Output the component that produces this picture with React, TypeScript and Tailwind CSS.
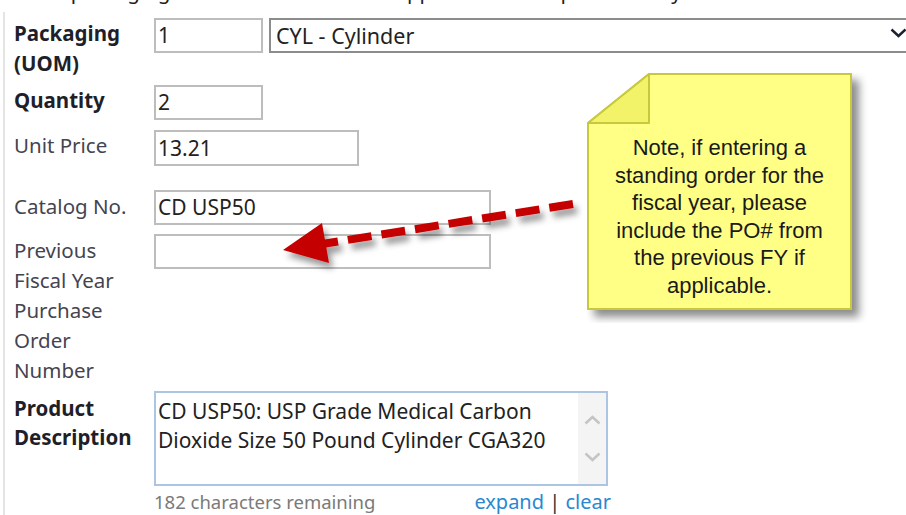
import React from 'react';

const labelBold = 'font-bold text-[#1f1f2a]';
const labelPlain = 'text-[#444450]';

function TextBox({ value, width }: { value?: string; width: string }) {
  return (
    <div
      className={`${width} h-[35px] border-2 border-[#bdbdbd] bg-white px-[2px] text-[21px] leading-[31px] text-[#222]`}
    >
      {value}
    </div>
  );
}

function Chevron({ up, className }: { up?: boolean; className?: string }) {
  return (
    <svg width="17" height="10" viewBox="0 0 17 10" className={className}>
      <polyline
        points={up ? '1.5,8.5 8.5,2 15.5,8.5' : '1.5,1.5 8.5,8 15.5,1.5'}
        fill="none"
        stroke="currentColor"
        strokeWidth="2.4"
      />
    </svg>
  );
}

export default function App() {
  return (
    <div className="relative h-[515px] w-[906px] overflow-hidden bg-white font-['Noto_Sans','Open_Sans',sans-serif] text-[20.5px]">
      {/* tail of the line above the form */}
      <div className="h-[6px] overflow-hidden">
        <p className="mt-[-24px] pl-[14px] leading-[30px] text-[#222] whitespace-nowrap">
          Enter packaging units as shown in the supplier&nbsp;&nbsp;&nbsp;&nbsp;&nbsp;&nbsp;&nbsp;&nbsp;&nbsp;&nbsp;&nbsp;&nbsp;&nbsp;&nbsp;&nbsp;&nbsp;&nbsp;quote exactly.
        </p>
      </div>

      <div className="ml-[3px] mt-[6px] flex flex-col border-l-2 border-[#e4e4e4] pl-[9px] pt-[6px] pb-[40px]">
        {/* Packaging */}
        <div className="flex">
          <div className={`w-[140px] shrink-0 leading-[30px] ${labelBold}`}>
            Packaging
            <br />
            (UOM)
          </div>
          <div className="flex">
            <TextBox value="1" width="w-[109px]" />
            <div className="ml-[6px] flex h-[35px] w-[650px] items-center justify-between border-2 border-[#8c8c8c] pl-[5px] pr-[10px] text-[21.5px] text-[#222]">
              <span className="leading-[31px]">CYL - Cylinder</span>
              <Chevron className="mb-[6px] text-[#1c2230]" />
            </div>
          </div>
        </div>

        {/* Quantity */}
        <div className="mt-[7px] flex">
          <div className={`w-[140px] shrink-0 leading-[30px] ${labelBold}`}>Quantity</div>
          <TextBox value="2" width="w-[109px]" />
        </div>

        {/* Unit Price */}
        <div className="mt-[10px] flex">
          <div className={`w-[140px] shrink-0 leading-[30px] ${labelPlain}`}>Unit Price</div>
          <div className="h-[36px] w-[205px] border-2 border-[#bdbdbd] px-[2px] text-[21px] leading-[32px] text-[#222]">
            13.21
          </div>
        </div>

        {/* Catalog No. */}
        <div className="mt-[24px] flex">
          <div className={`w-[140px] shrink-0 pt-[1px] leading-[30px] ${labelPlain}`}>Catalog No.</div>
          <TextBox value="CD USP50" width="w-[337px]" />
        </div>

        {/* Previous FY PO */}
        <div className="mt-[9px] flex">
          <div className={`w-[140px] shrink-0 pt-[1px] leading-[30px] ${labelPlain}`}>
            Previous
            <br />
            Fiscal Year
            <br />
            Purchase
            <br />
            Order
            <br />
            Number
          </div>
          <TextBox width="w-[337px]" />
        </div>

        {/* Product Description */}
        <div className="mt-[6px] flex">
          <div className={`w-[140px] shrink-0 pt-[3px] leading-[29px] ${labelBold}`}>
            Product
            <br />
            Description
          </div>
          <div className="flex w-[457px] flex-col">
            <div className="flex h-[95px] w-[454px] border-2 border-[#abc5e2]">
              <div className="flex-1 pl-[2px] pt-[4px] text-[21px] leading-[29px] text-[#222]">
                CD USP50: USP Grade Medical Carbon
                <br />
                Dioxide Size 50 Pound Cylinder CGA320
              </div>
              <div className="flex w-[28px] flex-col items-center bg-[#f4f4f4] pt-[22px] text-[#c4c4c4]">
                <Chevron up />
                <Chevron className="mt-[27px]" />
              </div>
            </div>
            <div className="mt-[4px] flex justify-between leading-[24px]">
              <span className="text-[18.5px] text-[#7a7a7a]">182 characters remaining</span>
              <span className="text-[20px] text-[#2a87d0]">
                expand <span className="text-[#333]">|</span> clear
              </span>
            </div>
          </div>
        </div>
      </div>

      {/* dashed pointer toward the PO field */}
      <svg className="pointer-events-none absolute left-0 top-0" width="906" height="515">
        <defs>
          <filter id="arrowShadow" x="-10%" y="-50%" width="120%" height="200%">
            <feDropShadow dx="4" dy="6" stdDeviation="3" floodColor="#000" floodOpacity="0.4" />
          </filter>
        </defs>
        <g filter="url(#arrowShadow)">
          <line
            x1="573"
            y1="204"
            x2="322"
            y2="244"
            stroke="#c40000"
            strokeWidth="8"
            strokeDasharray="24 10"
          />
          <polygon points="283,250 322,223 329,263" fill="#c40000" />
        </g>
      </svg>

      {/* sticky note */}
      <div className="pointer-events-none absolute left-[587px] top-[73px] h-[250px] w-[285px]">
        <svg className="absolute left-0 top-0" width="285" height="250">
          <defs>
            <filter id="noteShadow" x="-10%" y="-10%" width="130%" height="130%">
              <feDropShadow dx="7" dy="7" stdDeviation="4" floodColor="#000" floodOpacity="0.45" />
            </filter>
          </defs>
          <polygon
            points="1,50 62,1 264,1 264,236 1,236"
            fill="#ffff86"
            stroke="#c8c83c"
            strokeWidth="2"
            filter="url(#noteShadow)"
          />
          <polygon points="1,50 62,1 62,50" fill="#f3f36a" stroke="#c8c83c" strokeWidth="2" strokeLinejoin="round" />
        </svg>
        <div className="relative w-[265px] pt-[61px] text-center font-['Liberation_Sans',Arial,sans-serif] text-[22px] leading-[27.5px] text-[#1a1a1a]">
          Note, if entering a
          <br />
          standing order for the
          <br />
          fiscal year, please
          <br />
          include the PO# from
          <br />
          the previous FY if
          <br />
          applicable.
        </div>
      </div>
    </div>
  );
}
